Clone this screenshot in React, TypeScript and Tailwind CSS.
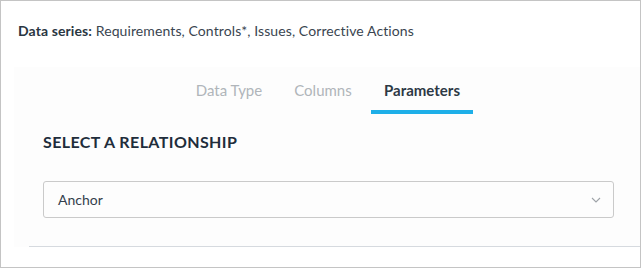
import React from "react";

export default function App() {
  const font = { fontFamily: "Lato, 'Open Sans', sans-serif" };
  return (
    <div className="w-[642px] h-[269px] bg-white" style={font}>
      <div className="w-[641px] h-[268px] border border-[#c4c4c4] bg-white flex flex-col">
        <div className="h-[66px] pt-[21px] pl-[17px] text-[14px] leading-[18px] tracking-[0.1px] text-[#3a4550]">
          <span className="font-bold text-[#2a3642]">Data series:</span> Requirements, Controls*, Issues, Corrective Actions
        </div>
        <div className="ml-[13px] flex-1 bg-[#fdfdfd] flex flex-col">
          <div className="h-[47px] flex pl-[169px] gap-[7px]">
            <div className="w-[92px] flex flex-col">
              <div className="flex-1 flex items-center justify-center pt-[3px] text-[15px] text-[#b0b5ba]">Data Type</div>
              <div className="h-[4px]" />
            </div>
            <div className="w-[82px] flex flex-col">
              <div className="flex-1 flex items-center justify-center pt-[3px] text-[15px] text-[#b0b5ba]">Columns</div>
              <div className="h-[4px]" />
            </div>
            <div className="w-[102px] flex flex-col">
              <div className="flex-1 flex items-center justify-center pt-[3px] text-[15px] font-bold text-[#2d3945]">Parameters</div>
              <div className="h-[4px] bg-[#1eafe8]" />
            </div>
          </div>
          <div className="mt-[18px] pl-[29px] text-[16px] leading-[20px] font-bold text-[#1f2d3b] tracking-[0.4px]">
            SELECT A RELATIONSHIP
          </div>
          <div className="mt-[29px] ml-[29px] mr-[26px] h-[37px] border border-[#cacaca] rounded-[3px] bg-[#fdfdfd] flex items-center justify-between pl-[14px] pr-[12px]">
            <span className="text-[14px] text-[#34404c]">Anchor</span>
            <svg width="10" height="6" viewBox="0 0 10 6" fill="none">
              <path d="M1 1 L5 5 L9 1" stroke="#9ea3a8" strokeWidth="1.1" />
            </svg>
          </div>
          <div className="mt-[28px] ml-[15px] border-t border-[#d6dadf]" />
          <div className="flex-1 bg-white" />
        </div>
      </div>
    </div>
  );
}
